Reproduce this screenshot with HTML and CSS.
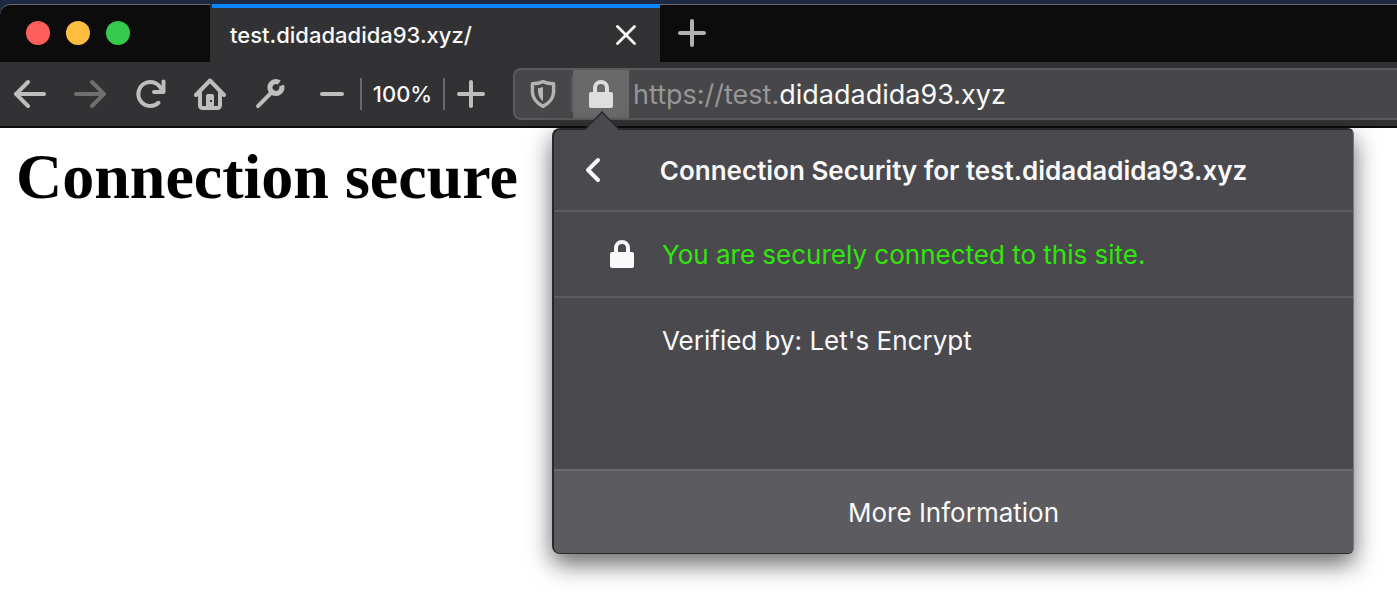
FILE: index.html
```html
<!DOCTYPE html>
<html lang="en">
<head>
<meta charset="utf-8">
<title>Connection secure</title>
<link rel="stylesheet" href="styles.css">
</head>
<body>
<div class="window">
  <header class="titlebar">
    <div class="window-controls">
      <button class="light light-close" aria-label="Close window"></button>
      <button class="light light-minimize" aria-label="Minimize window"></button>
      <button class="light light-zoom" aria-label="Zoom window"></button>
    </div>
    <div class="tab">
      <span class="tab-title">test.didadadida93.xyz/</span>
      <button class="tab-close" aria-label="Close tab"><svg width="20" height="20" viewBox="0 0 20 20"><path d="M1.500 1.500l17 17M18.500 1.500l-17 17" fill="none" stroke="currentColor" stroke-width="2.800" stroke-linecap="round"/></svg></button>
    </div>
    <button class="new-tab" aria-label="New tab"><svg width="28" height="28" viewBox="0 0 28 28"><path d="M14 2v24M2 14h24" fill="none" stroke="currentColor" stroke-width="4" stroke-linecap="round"/></svg></button>
  </header>
  <nav class="toolbar">
    <button class="tool" aria-label="Back"><svg width="32" height="32" viewBox="0 0 32 32"><path d="M14 4L2 16l12 12M2 16h28" class="line"/></svg></button>
    <button class="tool" aria-label="Forward" disabled><svg width="32" height="32" viewBox="0 0 32 32"><path d="M18 4L30 16 18 28M30 16H2" class="line"/></svg></button>
    <button class="tool" aria-label="Reload"><svg width="32" height="32" viewBox="0 0 32 32"><path d="M24.500 24.800A12 12 0 1 1 28 13" class="line"/><path d="M29.500 3.500V14H20" class="line" stroke-linejoin="round"/></svg></button>
    <button class="tool" aria-label="Home"><svg width="32" height="32" viewBox="0 0 32 32"><path d="M2 17L16 2.500 30 17" class="line" stroke-linejoin="round"/><path d="M6 15v12.500a2.500 2.500 0 0 0 2.500 2.500h15a2.500 2.500 0 0 0 2.500-2.500V15" class="line"/><path d="M12 30V18a2 2 0 0 1 2-2h4a2 2 0 0 1 2 2v12zM16 22v2h2v-2z" class="solid" fill-rule="evenodd"/></svg></button>
    <button class="tool" aria-label="Developer tools"><svg width="32" height="32" viewBox="0 0 32 32"><path d="M4 28.200L18 14" class="line"/><path d="M25.300 4.500A6 6 0 1 0 27.600 7.500" fill="none" stroke="currentColor" stroke-width="5"/></svg></button>
    <div class="zoom">
      <button class="zoom-out" aria-label="Zoom out"><svg width="28" height="32" viewBox="0 0 28 32"><path d="M4 16h20" class="line"/></svg></button>
      <button class="zoom-level" aria-label="Reset zoom level">100%</button>
      <button class="zoom-in" aria-label="Zoom in"><svg width="28" height="32" viewBox="0 0 28 32"><path d="M2 16h24M14 4v24" class="line"/></svg></button>
    </div>
    <div class="urlbar">
      <button class="shield" aria-label="Tracking protection"><svg width="28" height="30" viewBox="0 0 28 30"><path d="M14 2.600c3.500 1.500 7 2.100 10.600 2.200v7.400c0 6.800-4.800 12.400-10.600 15.200C8.200 24.600 3.400 19 3.400 12.200V4.800C7 4.700 10.500 4.100 14 2.600z" fill="none" stroke="currentColor" stroke-width="3.400" stroke-linejoin="round"/><path d="M14 8v14.500c-3-2.700-5-6-5-10V9.300c1.700-.2 3.300-.6 5-1.300z" fill="currentColor"/></svg></button>
      <button class="identity" aria-label="Site identity" aria-expanded="true"><svg width="24" height="28" viewBox="0 0 24 28"><path d="M6 14V8a6 6 0 0 1 12 0v6" fill="none" stroke="currentColor" stroke-width="4"/><rect y="12" width="24" height="16" rx="2" fill="currentColor"/></svg></button>
      <div class="url" role="textbox" aria-label="Address" contenteditable="true" spellcheck="false">https://test.<span class="url-domain">didadadida93.xyz</span></div>
      <section class="popup" aria-label="Connection security">
        <svg class="popup-arrow" width="36" height="20" viewBox="0 0 36 20"><path d="M1 19L18 1l17 18v1H1z" fill="#4a494e"/><path d="M1 18.500L18 1l17 17.500" fill="none" stroke="#29282c" stroke-width="1.500"/></svg>
        <div class="popup-header">
          <button class="popup-back" aria-label="Back to site information"><svg width="16" height="26" viewBox="0 0 16 26"><path d="M13 3L3 13l10 10" fill="none" stroke="currentColor" stroke-width="4" stroke-linecap="round" stroke-linejoin="round"/></svg></button>
          <h2 class="popup-title">Connection Security for test.didadadida93.xyz</h2>
        </div>
        <div class="popup-status">
          <svg class="status-lock" width="24" height="28" viewBox="0 0 24 28"><path d="M6 14V8a6 6 0 0 1 12 0v6" fill="none" stroke="currentColor" stroke-width="4"/><rect y="12" width="24" height="16" rx="2" fill="currentColor"/></svg>
          <p class="status-text">You are securely connected to this site.</p>
        </div>
        <p class="popup-verifier">Verified by: Let's Encrypt</p>
        <button class="popup-more">More Information</button>
      </section>
    </div>
  </nav>
  <main class="page">
    <h1 class="page-title">Connection secure</h1>
  </main>
</div>
</body>
</html>
```
FILE: styles.css
```css
* { box-sizing: border-box; }
body {
  margin: 0;
  min-height: 100vh;
  padding-top: 4px;
  background: linear-gradient(#1b2a42 0 24px, #fff 24px);
  font-family: Inter, "Liberation Sans", sans-serif;
  overflow: hidden;
}
button {
  display: flex;
  align-items: center;
  justify-content: center;
  padding: 0;
  border: 0;
  background: none;
  color: inherit;
  font: inherit;
}
svg { display: block; flex: none; }
h1, h2, p { margin: 0; }
.line { fill: none; stroke: currentColor; stroke-width: 4; stroke-linecap: round; }
.solid { fill: currentColor; }

.titlebar {
  display: flex;
  height: 58px;
  background: #0c0c0d;
  border-radius: 10px 0 0 0;
  box-shadow: inset 0 1px #6b6c6d;
  color: #b1b1b3;
}
.window-controls {
  display: flex;
  gap: 16px;
  width: 212px;
  padding: 17px 0 0 26px;
  border-right: 2px solid #323234;
}
.light { width: 24px; height: 24px; border-radius: 50%; }
.light-close { background: #ff5f5a; }
.light-minimize { background: #ffbd40; }
.light-zoom { background: #35ca4c; }
.tab {
  display: flex;
  align-items: center;
  justify-content: space-between;
  width: 448px;
  padding: 0 24px 0 18px;
  background: #323234;
  border-top: 4px solid #0a84ff;
  box-shadow: inset 0 -1px #323234;
  color: #f9f9fa;
}
.tab-title { font-size: 22px; font-weight: 500; line-height: 28px; }
.new-tab { width: 64px; }

.toolbar {
  display: flex;
  align-items: center;
  height: 66px;
  background: #323234;
  border-bottom: 2px solid #0c0c0d;
  color: #bebebf;
}
.tool { flex: none; width: 60px; height: 56px; }
.tool:disabled { color: #6f6f70; }
.zoom { display: flex; flex: none; height: 32px; padding: 0 16px 0 4px; }
.zoom-out { width: 56px; }
.zoom-level {
  width: 85px;
  border: solid #69696b;
  border-width: 0 2px;
  color: #f9f9fa;
  font-size: 22px;
  font-weight: 500;
}
.zoom-in { width: 52px; }
.urlbar {
  position: relative;
  display: flex;
  flex: 1;
  align-items: center;
  height: 52px;
  background: #474749;
  border: 2px solid #5a5a5c;
  border-right: 0;
  border-radius: 8px 0 0 8px;
}
.shield { width: 58px; height: 36px; border-right: 2px solid #55595e; color: #b4b4b5; }
.identity { width: 56px; height: 48px; background: #69696a; color: #dededf; }
.url { padding: 2px 0 0 4px; color: #969697; font-size: 27px; line-height: 36px; white-space: nowrap; outline: 0; }
.url-domain { color: #f9f9fa; }

.popup {
  position: absolute;
  top: 58px;
  left: 37px;
  width: 802px;
  background: #4a494e;
  border: 2px solid #29282c;
  border-width: 2px 1px 1px 2px;
  border-right-color: #77777a;
  border-radius: 8px 6px 6px 8px;
  box-shadow: 0 10px 24px rgba(0, 0, 0, .6);
  color: #f9f9fa;
  font-size: 26px;
  line-height: 32px;
}
.popup-arrow { position: absolute; top: -19px; left: 30px; }
.popup-header {
  display: flex;
  align-items: center;
  height: 82px;
  border-bottom: 2px solid #5d5d61;
}
.popup-back { width: 78px; height: 60px; }
.popup-title { flex: 1; padding: 2px 78px 0 0; font-size: 26px; font-weight: 600; text-align: center; white-space: nowrap; }
.popup-status {
  display: flex;
  align-items: center;
  gap: 28px;
  height: 86px;
  padding-left: 56px;
  border-bottom: 2px solid #5d5d61;
}
.status-text { padding-top: 2px; color: #30e60b; }
.popup-verifier { min-height: 171px; padding: 27px 24px 24px 108px; }
.popup-more {
  width: 100%;
  height: 84px;
  padding-top: 2px;
  background: #5c5b60;
  border-top: 2px solid #6c6b70;
  border-radius: 0 0 4px 6px;
}
.page { padding: 8px 16px; color: #000; }
.page-title { font-family: "Liberation Serif", serif; font-size: 64px; line-height: 82px; }
```
